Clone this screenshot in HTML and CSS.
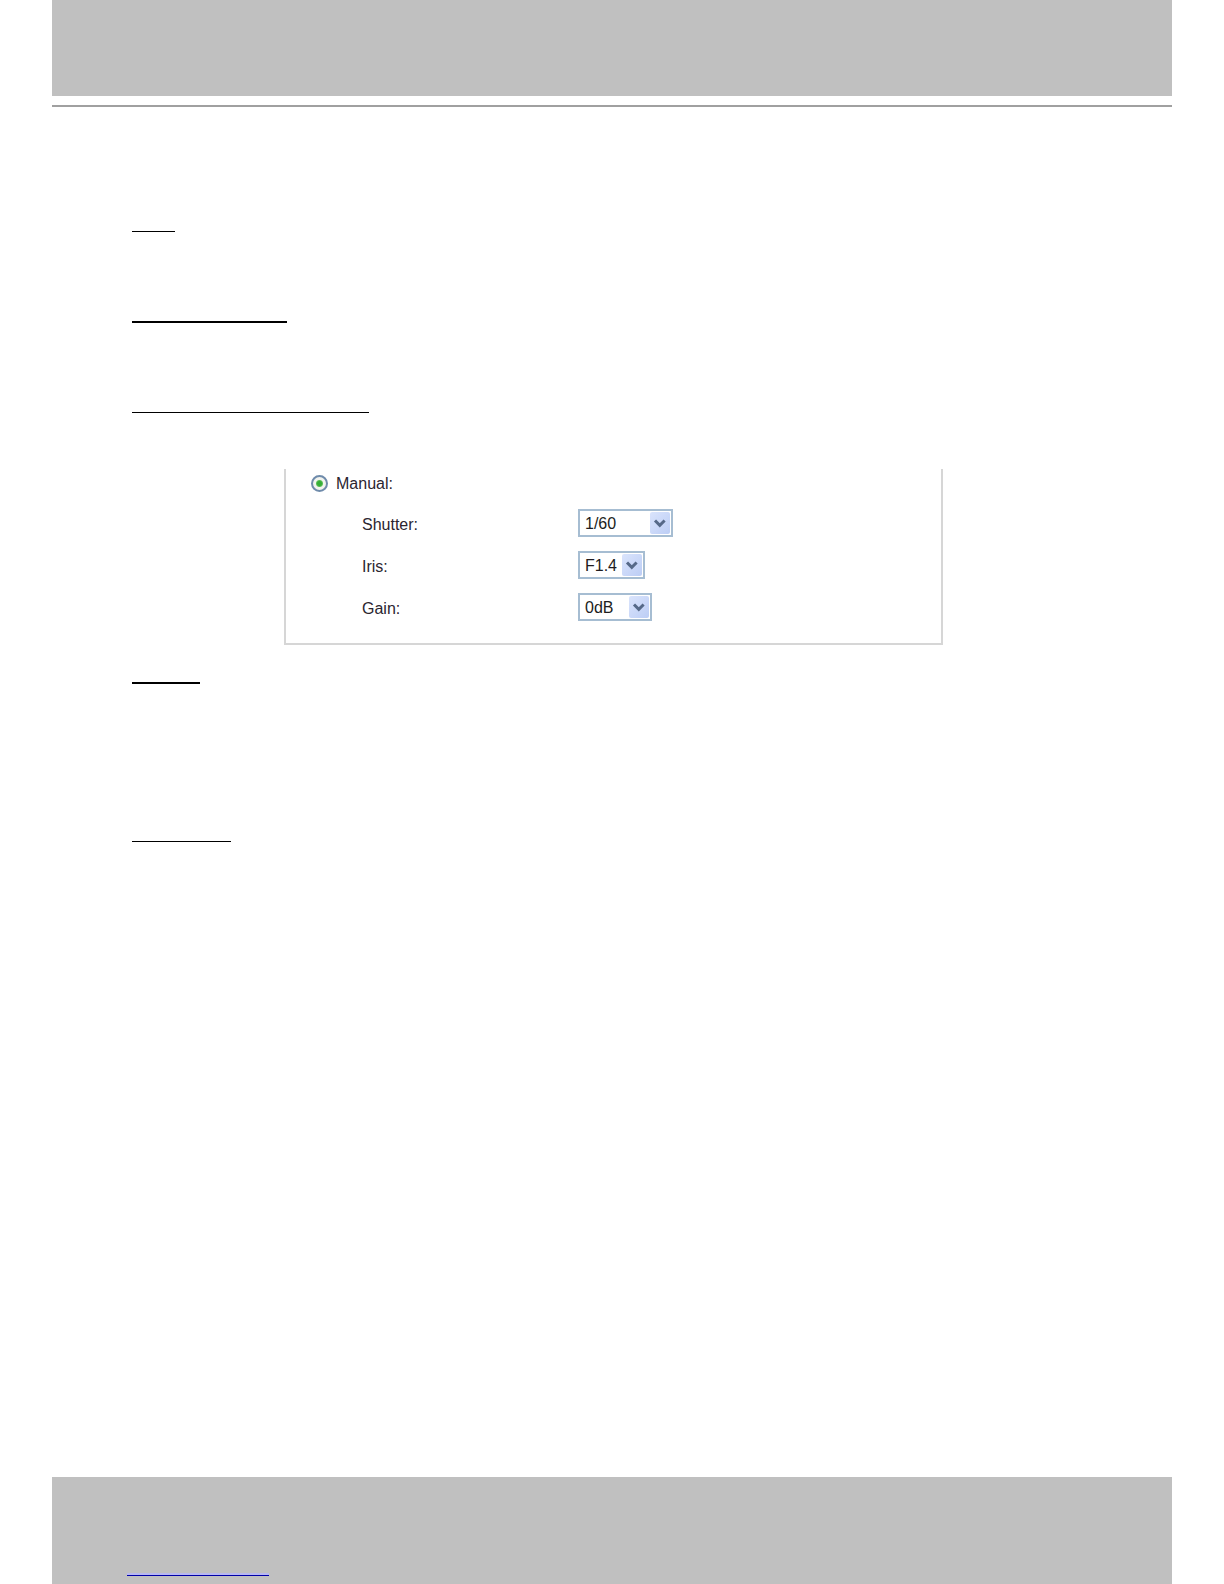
FILE: index.html
```
<!DOCTYPE html>
<html lang="en">
<head>
  <meta charset="UTF-8" />
  <meta name="viewport" content="width=device-width, initial-scale=1.0" />
  <title>Exposure</title>
  <link rel="stylesheet" href="styles.css">
</head>
<body>
  <div class="page">
    <header class="band band-top"></header>
    <hr class="divider">

    <main class="content">
      <hr class="line line-first">
      <hr class="line line-medium line-bold">
      <hr class="line line-long">

      <form class="panel">
        <div class="mode">
          <input class="radio" type="radio" id="manual" name="mode" checked>
          <label for="manual">Manual:</label>
        </div>

        <div class="settings">
          <label for="shutter">Shutter:</label>
          <div class="dropdown dropdown-shutter">
            <select id="shutter"><option>1/60</option></select>
            <svg class="arrow" viewBox="0 0 20 22" aria-hidden="true">
              <use href="#arrow" />
            </svg>
          </div>

          <label for="iris">Iris:</label>
          <div class="dropdown dropdown-iris">
            <select id="iris"><option>F1.4</option></select>
            <svg class="arrow" viewBox="0 0 20 22" aria-hidden="true">
              <use href="#arrow" />
            </svg>
          </div>

          <label for="gain">Gain:</label>
          <div class="dropdown dropdown-gain">
            <select id="gain"><option>0dB</option></select>
            <svg class="arrow" viewBox="0 0 20 22" aria-hidden="true">
              <use href="#arrow" />
            </svg>
          </div>
        </div>
      </form>

      <hr class="line line-short line-bold">
      <hr class="line line-last">
    </main>

    <footer class="band band-bottom">
      <a class="footer-link" href="#" aria-label="Website"></a>
    </footer>
  </div>

  <svg class="sprite" aria-hidden="true">
    <defs>
      <linearGradient id="arrow-fill" x1="0" y1="0" x2="1" y2="1">
        <stop offset="0" stop-color="#dae4fc" />
        <stop offset="1" stop-color="#bccdf5" />
      </linearGradient>
      <symbol id="arrow" viewBox="0 0 20 22">
        <rect width="20" height="22" rx="2" fill="url(#arrow-fill)" />
        <path d="M5 8.5l4.8 4.8 4.8-4.8" fill="none" stroke="#566988" stroke-width="3" />
      </symbol>
    </defs>
  </svg>
</body>
</html>
```
FILE: styles.css
```
:root {
  --band: #c0c0c0;
  --panel-border: #d6d6d6;
  --field-border: #a6bdd2;
  --text: #2b2530;
}

* {
  box-sizing: border-box;
}

body {
  margin: 0;
  background: #fff;
  color: var(--text);
  font-family: "Liberation Sans", Arial, sans-serif;
  font-size: 16px;
}

.page {
  display: flex;
  flex-direction: column;
  min-height: 100vh;
  padding: 0 52px;
}

.band {
  background: var(--band);
}

.band-top {
  height: 96px;
}

.divider {
  width: 100%;
  height: 2px;
  margin: 9px 0 0;
  border: 0;
  background: #a0a0a0;
}

.content {
  flex: 1;
  padding: 0 80px;
}

/* section lines */
.line {
  height: 1px;
  margin: 89px 0 0;
  border: 0;
  background: #000;
}

.line-bold {
  height: 2px;
}

.line-first {
  width: 43px;
  margin-top: 124px;
}

.line-medium {
  width: 155px;
}

.line-long {
  width: 237px;
}

.line-short {
  width: 68px;
  margin-top: 37px;
}

.line-last {
  width: 99px;
  margin-top: 157px;
}

/* manual exposure panel */
.panel {
  max-width: 659px;
  margin: 56px 0 0 152px;
  padding: 0 25px 22px;
  border: 2px solid var(--panel-border);
  border-top: 0;
}

.mode {
  display: flex;
  align-items: center;
  gap: 8px;
  height: 28px;
}

.mode label {
  padding-top: 2px;
}

.radio {
  appearance: none;
  width: 17px;
  height: 17px;
  margin: 0;
  border: 2px solid #6f8bab;
  border-radius: 50%;
  background: radial-gradient(circle, #35ad35 0 2px, #58bf55 3px, #f1f3ee 4px);
}

.settings {
  display: grid;
  grid-template-columns: 216px 1fr;
  row-gap: 14px;
  margin-top: 12px;
  padding-left: 51px;
}

.settings label {
  height: 28px;
  padding-top: 2px;
  line-height: 28px;
}

.dropdown {
  position: relative;
  height: 28px;
}

.dropdown-shutter {
  width: 95px;
}

.dropdown-iris {
  width: 67px;
}

.dropdown-gain {
  width: 74px;
}

.dropdown select {
  appearance: none;
  width: 100%;
  height: 100%;
  padding: 0 0 0 5px;
  border: 2px solid var(--field-border);
  border-radius: 0;
  background: #fff;
  color: #201c20;
  font: inherit;
}

.arrow {
  position: absolute;
  top: 3px;
  right: 3px;
  width: 20px;
  height: 22px;
  pointer-events: none;
}

.sprite {
  position: absolute;
  width: 0;
  height: 0;
}

.band-bottom {
  display: flex;
  align-items: flex-end;
  height: 107px;
  padding: 0 75px 8px;
}

.footer-link {
  width: 142px;
  height: 3px;
  border-bottom: 1px solid #0000a8;
  background: #b8b8f0;
}
```
